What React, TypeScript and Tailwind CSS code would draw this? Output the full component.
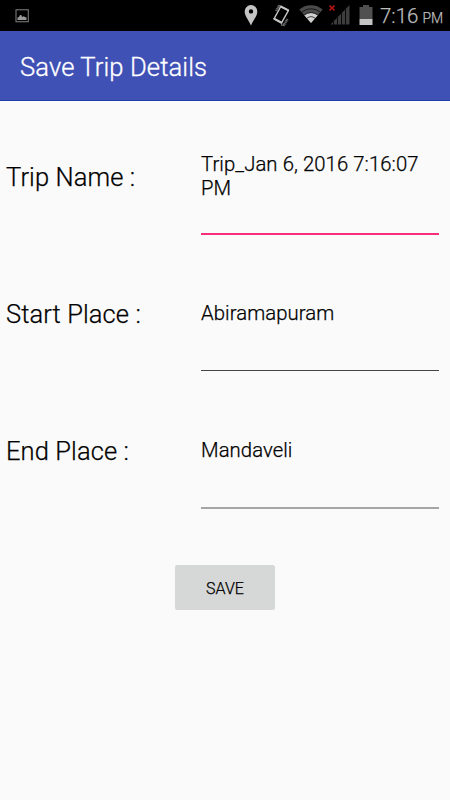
import React, { useState } from 'react';

const initialFields = [
  { id: 'name', label: 'Trip Name :', value: 'Trip_Jan 6, 2016 7:16:07 PM' },
  { id: 'start', label: 'Start Place :', value: 'Abiramapuram' },
  { id: 'end', label: 'End Place :', value: 'Mandaveli' },
];

// Underline is thicker and pink for the focused field
const underlines: Record<string, string> = {
  name: 'mb-[3px] h-0.5 bg-[#f92d7b]',
  start: 'mb-[4px] h-px bg-[#444444]',
  end: 'mb-[3px] h-0.5 bg-[#a5a5a5]',
};

function StatusBar() {
  return (
    <div className="flex h-[31px] shrink-0 items-start bg-black text-[#bdbdbd]">
      {/* Screenshot notification */}
      <svg className="mt-[9px] ml-[15px] shrink-0" width="14" height="14" viewBox="0 0 14 14">
        <rect x="1" y="0.75" width="12.3" height="12" fill="none" stroke="#777" strokeWidth="1.1" />
        <path d="M2.5 11V8.5l1.500-.5 1-2h1.200l1 2 1.300-.7 1 .5 2 .8V11z" fill="#999" />
      </svg>

      {/* Location */}
      <svg className="mt-[5px] ml-[215px] shrink-0" width="14" height="21" viewBox="0 0 14 21">
        <path
          fillRule="evenodd"
          fill="#c4c4c4"
          d="M7 0a6.3 6.3 0 0 0-6.3 6.4C.7 11 4.5 14.5 7 20.5c2.5-6 6.3-9.5 6.3-14.1A6.3 6.3 0 0 0 7 0zm0 4.2a2.2 2.2 0 1 1 0 4.4 2.2 2.2 0 0 1 0-4.4z"
        />
      </svg>

      {/* Vibrate */}
      <svg className="mt-[4px] ml-[14px] shrink-0" width="20" height="23" viewBox="0 0 20 23">
        <path d="M4 7L7 2l2.500 .500M9 20.500l3 .500L15.500 15" fill="none" stroke="#6a6a6a" strokeWidth="2.400" strokeDasharray="1.400 0.400" />
        <path d="M8.800 2.500l7.700 3.800L9.500 18.800 2 14.800z" fill="#000" stroke="#c4c4c4" strokeWidth="1.400" strokeLinejoin="round" />
        <path d="M9.500 2.800l6.500 3.400M2.500 14.800l6.700 3.700" stroke="#c4c4c4" strokeWidth="2" strokeLinecap="round" />
      </svg>

      {/* Wifi */}
      <svg className="mt-[5px] ml-[6px] shrink-0" width="26" height="20" viewBox="0 0 26 20">
        <path d="M1.300 4.500a18 18 0 0 1 23.400 0L13 18z" fill="#4b4b4b" />
        <path d="M6.200 10.200a10.500 10.500 0 0 1 13.600 0L13 18z" fill="#d0d0d0" />
        <path d="M3.900 7a14.500 14.500 0 0 1 18.200 0M6.300 10a10.700 10.700 0 0 1 13.400 0M9 13.200a6.500 6.500 0 0 1 8 0" fill="none" stroke="#000" strokeWidth="0.700" />
      </svg>

      {/* Mobile signal, no service */}
      <svg className="mt-[4px] ml-[5px] shrink-0" width="22" height="22" viewBox="0 0 22 22">
        <path d="M1.500 20.500L20.500 1v19.500z" fill="#3d3d3d" />
        <path d="M4.500 14v7M8.500 9v12M12.500 5v16M16.500 2v19" stroke="#080808" strokeWidth="1" />
        <path d="M0.500 1.500l5 5M5.500 1.500l-5 5" stroke="#b51212" strokeWidth="1.600" />
      </svg>

      {/* Battery */}
      <svg className="mt-[5px] ml-[8px] shrink-0" width="14" height="20" viewBox="0 0 14 20">
        <path d="M4 0h6v2h3.500v12H.5V2H4z" fill="#505050" />
        <path d="M.5 14h13v6H.5z" fill="#c4c4c4" />
      </svg>

      <div className="ml-[7px] flex items-baseline whitespace-nowrap leading-[32px] font-light [-webkit-text-stroke:0.25px_#bdbdbd]">
        <span className="text-[20.5px]">7:16</span>
        <span className="ml-[4px] text-sm">PM</span>
      </div>
    </div>
  );
}

export default function App() {
  const [fields] = useState(initialFields);

  return (
    <div className="flex h-[800px] w-[450px] flex-col overflow-hidden bg-[#fafafa] font-[Roboto,sans-serif] font-light text-black">
      <StatusBar />

      <header className="flex h-[70px] shrink-0 items-center border-b border-[#1c3fa8] bg-[#3f51b5] pt-[3px] pl-5">
        <h1 className="text-[25.6px] leading-[30px] tracking-[0.1px] text-white [-webkit-text-stroke:0.3px_#ffffff]">
          Save Trip Details
        </h1>
      </header>

      <main className="flex flex-col [-webkit-text-stroke:0.25px_#000000]">
        {fields.map((field) => (
          <div key={field.id} className="flex h-[137px] items-start pl-[6px]">
            <label className="w-[195px] shrink-0 pt-[61px] text-[25.5px] leading-[30px] tracking-[0.1px]">
              {field.label}
            </label>
            <div className="flex h-[137px] w-[238px] flex-col justify-between">
              <p
                className={`w-[228px] text-[20.3px] leading-6 tracking-[0.08px] ${
                  field.id === 'name' ? 'pt-[51px]' : 'pt-[63px]'
                }`}
              >
                {field.value}
              </p>
              <div className={underlines[field.id]} />
            </div>
          </div>
        ))}

        <button className="mt-[53px] h-[45px] w-[100px] self-center rounded-[2px] bg-[#d6d7d7] pt-[2px] text-[16px]">
          SAVE
        </button>
      </main>
    </div>
  );
}
